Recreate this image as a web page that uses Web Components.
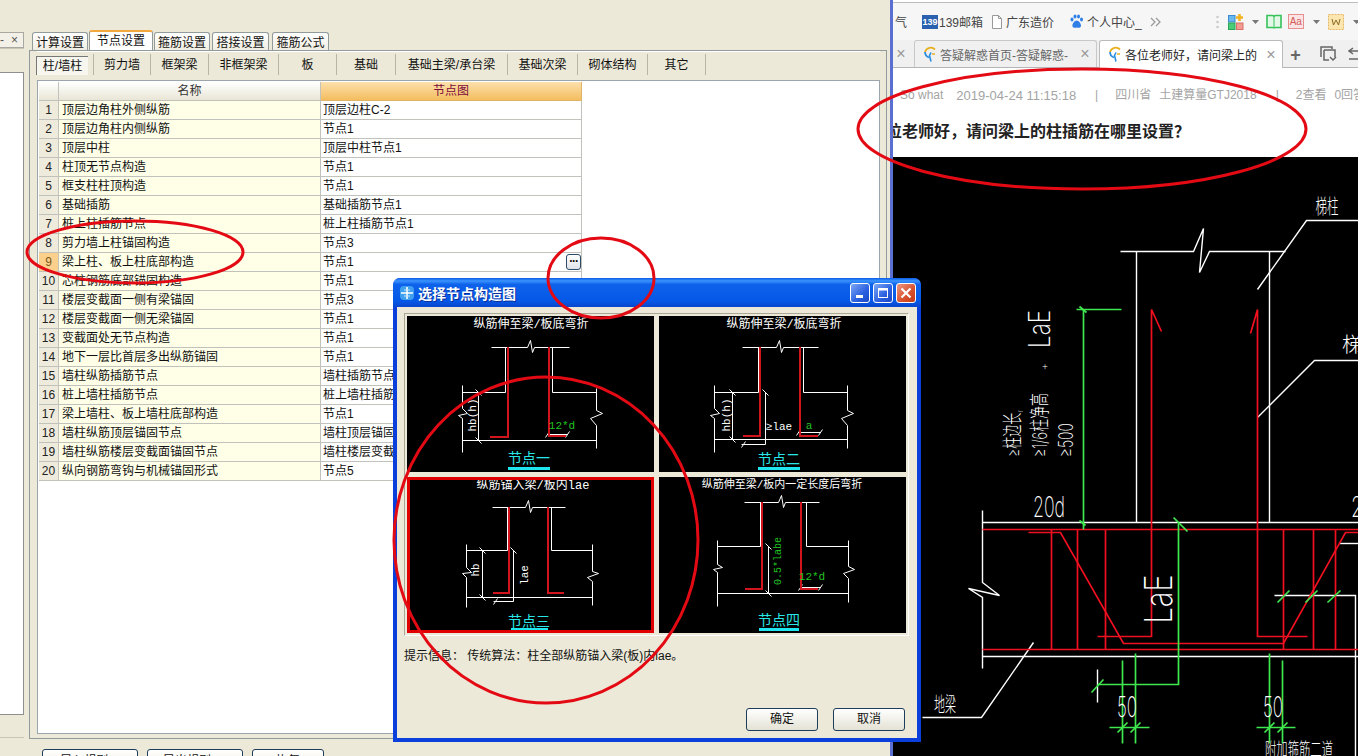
<!DOCTYPE html>
<html lang="zh">
<head>
<meta charset="utf-8">
<title>选择节点构造图</title>
<style>
    html, body { margin: 0; padding: 0; overflow: hidden; background: #ece9d8; }
</style>
</head>
<body>
<gcl-app>
    <settings-window></settings-window>
    <browser-pane></browser-pane>
    <node-dialog></node-dialog>
    <red-marks></red-marks>
</gcl-app>

<script>
const UI_FONT = `"Liberation Sans", "Noto Sans CJK SC", sans-serif`

class GclApp extends HTMLElement {
    constructor() {
        super()
        this.attachShadow({ mode: 'open' })
        this.shadowRoot.innerHTML = `
            <style>
                :host {
                    display: grid;
                    grid-template-columns: 890px 3px 465px;
                    width: 1358px;
                    height: 756px;
                    overflow: hidden;
                    position: relative;
                    font: 12px ${UI_FONT};
                    color: #111;
                }
                .strip { background: #5b6fd2; }
            </style>
            <slot name="left"></slot>
            <div class="strip"></div>
            <slot></slot>
        `
        this.querySelector('settings-window').slot = 'left'
    }
}

class SidePane extends HTMLElement {
    constructor() {
        super()
        this.attachShadow({ mode: 'open' })
        this.shadowRoot.innerHTML = `
            <style>
                :host {
                    display: flex;
                    flex-direction: column;
                    height: 756px;
                    overflow: hidden;
                }
                .head {
                    margin-top: 32px;
                    height: 14px;
                    display: flex;
                    justify-content: space-between;
                    align-items: center;
                    padding: 0 5px 0 0;
                    background: #f3f1e7;
                    border: 1px solid #a8a8a0;
                    border-left: 0;
                    font-size: 12px;
                    line-height: 14px;
                    color: #555;
                }
                .gap {
                    height: 23px;
                    border-top: 1px solid #c9c6b6;
                }
                .list {
                    height: 641px;
                    background: #fff;
                    border: 1px solid #8f8f8f;
                    border-left: 0;
                }
                .foot {
                    height: 22px;
                    border-bottom: 1px solid #c9c6b6;
                }
            </style>
            <div class="head"><span>-</span><span>×</span></div>
            <div class="gap"></div>
            <div class="list"></div>
            <div class="foot"></div>
        `
    }
}

class SettingsWindow extends HTMLElement {
    constructor() {
        super()
        this.attachShadow({ mode: 'open' })
        const tabs = [['计算设置', 56, 0], ['节点设置', 64, 0], ['箍筋设置', 56, 0], ['搭接设置', 57, 1], ['箍筋公式', 57, 2]]
        const subs = [['柱/墙柱', 57], ['剪力墙', 57], ['框架梁', 58], ['非框架梁', 70], ['板', 58], ['基础', 59], ['基础主梁/承台梁', 112], ['基础次梁', 70], ['砌体结构', 70], ['其它', 58]]
        this.shadowRoot.innerHTML = `
            <style>
                :host {
                    display: grid;
                    grid-template-columns: 24px 866px;
                    height: 756px;
                    background: #ece9d8;
                    overflow: hidden;
                }
                .main {
                    padding: 31px 3px 0 5px;
                    display: flex;
                    flex-direction: column;
                }
                .tabs {
                    display: flex;
                    height: 19px;
                    padding-left: 3px;
                    gap: 1px;
                    align-items: flex-end;
                }
                .tab {
                    height: 18px;
                    line-height: 20px;
                    text-align: center;
                    background: linear-gradient(#fff, #f0eee2);
                    border: 1px solid #919b9c;
                    border-bottom: 0;
                    border-radius: 3px 3px 0 0;
                    box-sizing: border-box;
                }
                .tab.on {
                    height: 20px;
                    line-height: 18px;
                    background: #fff;
                    border-top: 2px solid #f2a83c;
                    position: relative;
                    z-index: 1;
                }
                .panel {
                    height: 689px;
                    box-sizing: border-box;
                    border: 1px solid #919b9c;
                    padding: 0 6px 4px 7px;
                    display: flex;
                    flex-direction: column;
                }
                .subs {
                    height: 29px;
                    display: flex;
                    padding-top: 2px;
                    box-sizing: border-box;
                    border-top: 1px solid #fff;
                    align-items: flex-start;
                }
                .sub {
                    height: 21px;
                    line-height: 22px;
                    text-align: center;
                    box-sizing: border-box;
                    border-right: 1px solid #b8b5a6;
                    white-space: nowrap;
                }
                .sub.on > span {
                    display: block;
                    width: 52px;
                    margin: 2px 0 0 -1px;
                    height: 19px;
                    line-height: 18px;
                    background: #f6f5ee;
                    border-top: 1px solid #777;
                    border-left: 1px solid #777;
                    box-sizing: border-box;
                }
                .actions {
                    display: flex;
                    gap: 9px;
                    margin-top: 10px;
                    padding-left: 13px;
                }
                .btn {
                    width: 96px;
                    height: 22px;
                    line-height: 22px;
                    text-align: center;
                    box-sizing: border-box;
                    border: 1px solid #1c3d5c;
                    border-radius: 3px;
                    background: linear-gradient(#fff, #ece9d8);
                }
                .btn.small { width: 72px; }
            </style>
            <side-pane></side-pane>
            <div class="main">
                <div class="tabs">
                    ${tabs.map(([t, w, m], i) => `<div class="tab ${i == 1 ? 'on' : ''}" style="width:${w}px;margin-left:${m}px">${t}</div>`).join('')}
                </div>
                <div class="panel">
                    <div class="subs">
                        ${subs.map(([t, w], i) => `<div class="sub ${i == 0 ? 'on' : ''}" style="width:${w}px"><span>${t}</span></div>`).join('')}
                    </div>
                    <node-table></node-table>
                </div>
                <div class="actions">
                    <div class="btn">导入规则(I)</div>
                    <div class="btn">导出规则(E)</div>
                    <div class="btn small">恢复</div>
                </div>
            </div>
        `
    }
}

class NodeTable extends HTMLElement {
    constructor() {
        super()
        this.attachShadow({ mode: 'open' })
        const rows = [
            ['顶层边角柱外侧纵筋', '顶层边柱C-2'],
            ['顶层边角柱内侧纵筋', '节点1'],
            ['顶层中柱', '顶层中柱节点1'],
            ['柱顶无节点构造', '节点1'],
            ['框支柱柱顶构造', '节点1'],
            ['基础插筋', '基础插筋节点1'],
            ['桩上柱插筋节点', '桩上柱插筋节点1'],
            ['剪力墙上柱锚固构造', '节点3'],
            ['梁上柱、板上柱底部构造', '节点1'],
            ['芯柱钢筋底部锚固构造', '节点1'],
            ['楼层变截面一侧有梁锚固', '节点3'],
            ['楼层变截面一侧无梁锚固', '节点1'],
            ['变截面处无节点构造', '节点1'],
            ['地下一层比首层多出纵筋锚固', '节点1'],
            ['墙柱纵筋插筋节点', '墙柱插筋节点1'],
            ['桩上墙柱插筋节点', '桩上墙柱插筋节点1'],
            ['梁上墙柱、板上墙柱底部构造', '节点1'],
            ['墙柱纵筋顶层锚固节点', '墙柱顶层锚固节点1'],
            ['墙柱纵筋楼层变截面锚固节点', '墙柱楼层变截面节点1'],
            ['纵向钢筋弯钩与机械锚固形式', '节点5']
        ]
        this.shadowRoot.innerHTML = `
            <style>
                :host {
                    display: block;
                    flex: 1;
                    background: #fff;
                    border: 1px solid #9aa5ad;
                    padding: 1px 0 0 1px;
                    overflow: hidden;
                }
                .grid {
                    display: grid;
                    grid-template-columns: 20px 262px 261px;
                    grid-auto-rows: 19px;
                }
                .grid > div {
                    box-sizing: border-box;
                    border-bottom: 1px solid #c2c2bc;
                    border-right: 1px solid #c2c2bc;
                    padding-left: 3px;
                    line-height: 18px;
                    white-space: nowrap;
                    overflow: hidden;
                }
                .grid > .hd {
                    background: linear-gradient(#fff, #e9e6d6);
                    text-align: center;
                    padding: 0;
                    color: #333;
                }
                .grid > .hd.node {
                    background: linear-gradient(#fce0ac, #f4bd5f);
                    color: #7a0a3c;
                    border-color: #e0b468;
                }
                .grid > .num {
                    background: #eeebdd;
                    text-align: center;
                    padding: 0;
                    color: #222;
                }
                .grid > .num.cur { background: #fbd08c; color: #7a5a20; }
                .grid > .name { background: #ffffe8; }
                .grid > .val {
                    display: flex;
                    justify-content: space-between;
                    padding: 0 0 0 2px;
                }
                .more {
                    width: 15px;
                    height: 16px;
                    margin-top: 1px;
                    box-sizing: border-box;
                    border: 1px solid #2b4a68;
                    border-radius: 3px;
                    background: linear-gradient(#fff, #dfe3e8);
                    font: bold 12px/7px "Liberation Sans", sans-serif;
                    text-align: center;
                    letter-spacing: -0.5px;
                }
            </style>
            <div class="grid">
                <div class="hd"></div>
                <div class="hd">名称</div>
                <div class="hd node">节点图</div>
                ${rows.map(([name, val], i) => `
                    <div class="num ${i == 8 ? 'cur' : ''}">${i + 1}</div>
                    <div class="name">${name}</div>
                    <div class="val"><span>${val}</span>${i == 8 ? '<div class="more">...</div>' : ''}</div>
                `).join('')}
            </div>
        `
    }
}

class NodeFigure extends HTMLElement {
    static figures = {
        one: {
            box: '407 316 247 156',
            title: ['纵筋伸至梁/板底弯折', 531, 325, 12],
            white: ['491,347 527,347 530,340 532,352 534,347 569,347', '505,347 505,392 462,392', '552,347 552,392 596,392', '462,385 462,408 467,413 458,415 462,418 462,452', '596,388 596,410 602,413 590,418 596,425 596,448', '462,440 596,440', '478,392 478,440', '475,389 481,395', '475,437 481,443', '547,434 567,434', '545,437 549,431', '565,437 569,431'],
            red: ['508,347 508,437 490,437', '549,347 549,436 566,436'],
            text: [['hb(h)', 473, 415, 'w', 11, -90], ['12*d', 562, 426, 'g', 11, 0]],
            label: ['节点一', 529, 457, 508, 467, 42]
        },
        two: {
            box: '659 316 247 156',
            title: ['纵筋伸至梁/板底弯折', 784, 325, 12],
            white: ['742,347 776,347 779,340 781,352 783,347 818,347', '758,347 758,392 714,392', '803,347 803,392 847,392', '714,385 714,408 719,413 710,415 714,418 714,452', '847,385 847,410 853,413 841,418 847,425 847,448', '714,439 847,439', '732,392 732,439', '729,389 735,395', '729,436 735,442', '765,392 765,444', '741,444 765,444', '762,389 768,395', '741,447 745,441', '798,432 820,432', '796,435 800,429', '818,435 822,429'],
            red: ['760,347 760,436 743,436', '800,347 800,436 818,436'],
            text: [['hb(h)', 727, 415, 'w', 11, -90], ['≥lae', 779, 427, 'w', 11, 0], ['a', 809, 426, 'g', 11, 0]],
            label: ['节点二', 779, 458, 758, 467, 42]
        },
        three: {
            box: '407 477 247 156',
            title: ['纵筋锚入梁/板内lae', 533, 486, 12],
            white: ['492,507 525,507 528,500 530,512 532,507 565,507', '507,507 507,550 466,550', '551,507 551,550 592,550', '466,544 466,567 471,572 462,573 466,577 466,607', '592,544 592,571 598,573 587,577 592,581 592,605', '466,597 592,597', '482,550 482,597', '479,547 485,553', '479,594 485,600', '513,550 513,601', '493,601 513,601', '510,547 516,553', '493,604 497,598'],
            red: ['509,507 509,593 493,593', '548,507 548,593 564,593'],
            text: [['hb', 476, 570, 'w', 11, -90], ['lae', 525, 575, 'w', 11, -90]],
            label: ['节点三', 529, 620, 511, 628, 37],
            selected: true
        },
        four: {
            box: '659 477 247 156',
            title: ['纵筋伸至梁/板内一定长度后弯折', 782, 485, 11],
            white: ['744,502 778,502 781,495 783,507 785,502 819,502', '760,502 760,546 717,546', '806,502 806,546 848,546', '717,540 717,564 722,567 713,569 717,572 717,606', '848,540 848,566 854,569 843,573 848,578 848,602', '717,593 848,593', '768,546 768,593', '765,543 771,549', '765,590 771,596', '800,587 820,587', '798,590 802,584', '818,590 822,584'],
            red: ['762,502 762,589 745,589', '801,502 801,589 818,589'],
            text: [['0.5*labe', 778, 561, 'g', 10, -90], ['12*d', 812, 577, 'g', 11, 0]],
            label: ['节点四', 779, 619, 759, 628, 40]
        }
    }

    constructor() {
        super()
        this.attachShadow({ mode: 'open' })
        const f = NodeFigure.figures[this.getAttribute('variant')]
        const lines = (list, cls) => list.map(p => `<polyline class="${cls}" points="${p}"/>`).join('')
        const texts = f.text.map(([s, x, y, cls, size, rot]) =>
            `<text class="${cls}" x="${x}" y="${y}" font-size="${size}" ${rot ? `transform="rotate(${rot} ${x} ${y})"` : ''}>${s}</text>`).join('')
        const [label, lx, ly, bx, by, bw] = f.label
        this.shadowRoot.innerHTML = `
            <style>
                :host {
                    display: block;
                    background: #000;
                    box-sizing: border-box;
                }
                svg { display: block; width: 247px; height: 156px; }
                polyline { fill: none; }
                .w { stroke: #fff; stroke-width: 1; }
                .r { stroke: #d0161c; stroke-width: 2; }
                text {
                    text-anchor: middle;
                    dominant-baseline: central;
                    font-family: "Liberation Mono", "Noto Sans CJK SC", monospace;
                }
                text.w { fill: #fff; stroke: none; }
                text.g { fill: #22c322; }
                text.c { fill: #28e6e6; font-family: "Noto Sans CJK SC", sans-serif; }
                .frame { fill: none; stroke: #e00000; stroke-width: 3; }
            </style>
            <svg viewBox="${f.box}">
                <g transform="translate(.5 .5)">${lines(f.white, 'w')}</g>
                ${lines(f.red, 'r')}
                <text class="w" x="${f.title[1]}" y="${f.title[2]}" font-size="${f.title[3]}">${f.title[0]}</text>
                ${texts}
                <text class="c" x="${lx}" y="${ly}" font-size="14">${label}</text>
                <rect x="${bx}" y="${by}" width="${bw}" height="3" fill="#1fe6ee"/>
                ${f.selected ? `<rect class="frame" x="408.5" y="478.5" width="244" height="153"/>` : ''}
            </svg>
        `
    }
}

class NodeDialog extends HTMLElement {
    constructor() {
        super()
        this.attachShadow({ mode: 'open' })
        this.shadowRoot.innerHTML = `
            <style>
                :host {
                    position: absolute;
                    left: 393px;
                    top: 278px;
                    width: 528px;
                    height: 464px;
                    box-sizing: border-box;
                    border: 4px solid #0a3fdc;
                    border-top: 0;
                    border-radius: 7px 7px 0 0;
                    background: #ece9d8;
                    display: flex;
                    flex-direction: column;
                }
                .title {
                    height: 29px;
                    margin: 0 -4px;
                    padding: 0 4px 0 6px;
                    box-sizing: border-box;
                    display: flex;
                    align-items: center;
                    border-radius: 7px 7px 0 0;
                    background: linear-gradient(#0a5ce8 0, #3b94ff 10%, #0f62ea 22%, #0558e6 80%, #0a46cc 100%);
                    color: #fff;
                    font: bold 14px "Noto Sans CJK SC", sans-serif;
                    text-shadow: 1px 1px 0 #0a2f9c;
                }
                .title svg { margin-right: 3px; }
                .title span { flex: 1; }
                .wb {
                    width: 20px;
                    height: 20px;
                    box-sizing: border-box;
                    border: 1px solid #fff;
                    border-radius: 3px;
                    margin-left: 3px;
                    background: linear-gradient(135deg, #7ea8f5, #2a5fe0 60%, #1c47c4);
                    display: flex;
                    align-items: center;
                    justify-content: center;
                }
                .wb.close { background: linear-gradient(135deg, #eb9a84, #d8502c 60%, #c23a16); margin-right: 1px; }
                .client {
                    flex: 1;
                    padding: 6px 8px 0 7px;
                    display: flex;
                    flex-direction: column;
                }
                .frame {
                    display: grid;
                    grid-template-columns: 247px 247px;
                    grid-template-rows: 156px 156px;
                    gap: 5px;
                    padding: 2px;
                    width: 505px;
                    height: 323px;
                    box-sizing: border-box;
                    border: 1px solid #aaa798;
                    border-right-color: #fff;
                    border-bottom-color: #fff;
                }
                .hint {
                    margin-top: 11px;
                    height: 18px;
                    line-height: 18px;
                    font-size: 12px;
                    white-space: nowrap;
                }
                .buttons {
                    display: flex;
                    justify-content: flex-end;
                    gap: 15px;
                    margin-top: 43px;
                    padding-right: 4px;
                }
                .buttons div {
                    width: 72px;
                    height: 23px;
                    line-height: 21px;
                    box-sizing: border-box;
                    text-align: center;
                    border: 1px solid #1c3d5c;
                    border-radius: 3px;
                    background: linear-gradient(#fff, #e4e2d4);
                }
            </style>
            <div class="title">
                <svg width="16" height="16" viewBox="0 0 16 16">
                    <rect x="1" y="1" width="14" height="14" rx="4" fill="#3fa0f0"/>
                    <path d="M8 2v12M2 8h12" stroke="#fff" stroke-width="1.6" fill="none"/>
                    <path d="M5 5h6M5 11h6" stroke="#bfe4ff" stroke-width="1" fill="none"/>
                </svg>
                <span>选择节点构造图</span>
                <div class="wb"><svg width="12" height="12" viewBox="0 0 12 12" style="margin:0"><rect x="2" y="8" width="7" height="3" fill="#fff"/></svg></div>
                <div class="wb"><svg width="12" height="12" viewBox="0 0 12 12" style="margin:0"><rect x="1.5" y="1.5" width="9" height="9" fill="none" stroke="#fff"/><rect x="1" y="1" width="10" height="2.5" fill="#fff"/></svg></div>
                <div class="wb close"><svg width="14" height="14" viewBox="0 0 14 14" style="margin:0"><path d="M2.5 2.5l9 9M11.5 2.5l-9 9" stroke="#fff" stroke-width="2.2"/></svg></div>
            </div>
            <div class="client">
                <div class="frame">
                    <node-figure variant="one"></node-figure>
                    <node-figure variant="two"></node-figure>
                    <node-figure variant="three"></node-figure>
                    <node-figure variant="four"></node-figure>
                </div>
                <div class="hint">提示信息： 传统算法：柱全部纵筋锚入梁(板)内lae。</div>
                <div class="buttons"><div>确定</div><div>取消</div></div>
            </div>
        `
    }
}

class BrowserPane extends HTMLElement {
    constructor() {
        super()
        this.attachShadow({ mode: 'open' })
        const favicon = `<svg width="14" height="17" viewBox="0 0 14 17" style="flex:none"><path d="M12 3.5A6 6 0 0 0 2 6" fill="none" stroke="#e8b020" stroke-width="1.8"/><path d="M2 6a6 6 0 0 0 4 5.5" fill="none" stroke="#2a8fe0" stroke-width="1.8"/><path d="M8 6.5 6.5 9.500l1.500 6" fill="none" stroke="#2a8fe0" stroke-width="1.600"/><path d="M9 8h3" stroke="#e8b020" stroke-width="1.500"/></svg>`
        const caret = `<svg width="7" height="4" viewBox="0 0 7 4"><path d="M0 0h7L3.500 4z" fill="#777"/></svg>`
        this.shadowRoot.innerHTML = `
            <style>
                :host {
                    display: flex;
                    flex-direction: column;
                    height: 756px;
                    overflow: hidden;
                    background: #fff;
                    font: 12px ${UI_FONT};
                }
                .top {
                    height: 2px;
                    flex: none;
                    background: #fff;
                    border-bottom: 1px solid #bdbdbd;
                }
                .bar {
                    height: 37px;
                    flex: none;
                    display: flex;
                    align-items: center;
                    background: #f6f6f6;
                    color: #444;
                    font-size: 12px;
                    white-space: nowrap;
                    padding-left: 2px;
                }
                .logo139 {
                    width: 16px;
                    height: 14px;
                    margin-left: 15px;
                    margin-right: 1px;
                    background: #2a62b0;
                    color: #fff;
                    font: bold 9px/14px "Liberation Sans", sans-serif;
                    text-align: center;
                    flex: none;
                }
                .bar svg { flex: none; }
                .aa {
                    width: 16px;
                    height: 15px;
                    box-sizing: border-box;
                    border: 1px solid #e58f8f;
                    background: #fde4e4;
                    color: #d25a5a;
                    font: 10px/13px "Liberation Sans", sans-serif;
                    text-align: center;
                    margin-left: 6px;
                    flex: none;
                }
                .tabs {
                    height: 28px;
                    flex: none;
                    box-sizing: border-box;
                    display: flex;
                    align-items: flex-end;
                    background: #f0f0f0;
                    border-bottom: 1px solid #b5b5b5;
                    white-space: nowrap;
                    color: #666;
                    font-size: 12px;
                }
                .x {
                    width: 14px;
                    text-align: center;
                    font: 16px/20px "Liberation Sans", sans-serif;
                    color: #999;
                    flex: none;
                }
                .tab {
                    height: 27px;
                    box-sizing: border-box;
                    border: 1px solid #c8c8c8;
                    border-bottom: 0;
                    border-radius: 3px 3px 0 0;
                    display: flex;
                    align-items: center;
                    gap: 3px;
                    padding: 0 4px 0 8px;
                    flex: none;
                    overflow: hidden;
                }
                .tab b { font-weight: normal; flex: 1; overflow: hidden; }
                .tab.on {
                    height: 28px;
                    margin-bottom: -1px;
                    background: #fff;
                    color: #222;
                    border-color: #bbb;
                    margin-left: 2px;
                }
                .plus { width: 25px; text-align: center; font: bold 18px/24px "Liberation Sans", sans-serif; color: #666; flex: none; }
                .meta {
                    height: 52px;
                    flex: none;
                    box-sizing: border-box;
                    padding: 19px 0 0 7px;
                    color: #a4a4a4;
                    font-size: 12px;
                    line-height: 17px;
                    display: flex;
                    white-space: nowrap;
                }
                .meta .d { font-size: 13px; }
                h1 {
                    margin: 0 0 0 -7px;
                    height: 37px;
                    flex: none;
                    font: bold 16px/20px "Noto Sans CJK SC", sans-serif;
                    color: #222;
                    white-space: nowrap;
                }
            </style>
            <div class="top"></div>
            <div class="bar">
                <span>气</span>
                <span class="logo139">139</span>
                <span>139邮箱</span>
                <svg style="margin-left:8px" width="12" height="14" viewBox="0 0 12 14"><path d="M1.500.5h6l3 3v10h-9zM7.500.5v3h3" fill="#fff" stroke="#999"/></svg>
                <span style="margin-left:3px">广东造价</span>
                <svg style="margin-left:15px" width="15" height="15" viewBox="0 0 15 15" fill="#2f7fe6"><ellipse cx="3" cy="5.500" rx="1.500" ry="2"/><ellipse cx="6" cy="2.500" rx="1.500" ry="2"/><ellipse cx="9.500" cy="2.500" rx="1.500" ry="2"/><ellipse cx="12.500" cy="5.500" rx="1.500" ry="2"/><path d="M7.700 6.500c2 0 4.300 3 4.300 5.200 0 2.200-2.500 2.400-4.300 1.800-1.800.6-4.300.4-4.300-1.800 0-2.200 2.300-5.200 4.300-5.200z"/></svg>
                <span style="margin-left:3px">个人中心_</span>
                <svg style="margin-left:8px" width="11" height="10" viewBox="0 0 11 10"><path d="M1 1l4 4-4 4M6 1l4 4-4 4" fill="none" stroke="#999" stroke-width="1.200"/></svg>
                <svg style="margin-left:55px" width="3" height="14" viewBox="0 0 3 14" fill="#ccc"><circle cx="1.500" cy="2" r="1.300"/><circle cx="1.500" cy="7" r="1.300"/><circle cx="1.500" cy="12" r="1.300"/></svg>
                <svg style="margin-left:9px" width="17" height="16" viewBox="0 0 17 16"><rect x=".5" y="1.500" width="6.500" height="6.500" fill="#6bb8f0" stroke="#3a8ad0"/><rect x=".5" y="9" width="6.500" height="6.500" fill="#4ccb78" stroke="#2aa858"/><rect x="8.500" y="9" width="6.500" height="6.500" fill="#f59a90" stroke="#d87068"/><path d="M11.500 0v7M8 3.500h7" stroke="#f2b41e" stroke-width="2.500"/></svg>
                <span style="margin-left:7px;display:flex">${caret}</span>
                <svg style="margin-left:7px" width="16" height="15" viewBox="0 0 16 15"><path d="M1 1.500h5.500c1 0 1.500.5 1.500 1.500 0-1 .5-1.500 1.500-1.500H15v12H9.500c-1 0-1.500.5-1.500 1-.0-.5-.5-1-1.500-1H1z" fill="#e4f8e8" stroke="#35c25a" stroke-width="1.600"/><path d="M8 3v10" stroke="#35c25a"/></svg>
                <span class="aa">Aa</span>
                <span style="margin-left:9px;display:flex">${caret}</span>
                <svg style="margin-left:8px" width="16" height="16" viewBox="0 0 16 16"><rect x=".5" y=".5" width="15" height="15" fill="#fbe6b0" stroke="#e8b860" stroke-dasharray="2 1"/><path d="M4 5l1.500 6L8 6l2.500 5L12 5" fill="none" stroke="#8a6a20"/></svg>
                <span style="margin-left:9px;display:flex">${caret}</span>
            </div>
            <div class="tabs">
                <div class="x" style="margin:0 5px 3px 1px">×</div>
                <div class="tab" style="width:183px;margin-left:1px">
                    ${favicon}<b>答疑解惑首页-答疑解惑-</b><span class="x">×</span>
                </div>
                <div class="tab on" style="width:184px">
                    ${favicon}<b>各位老师好，请问梁上的</b><span class="x">×</span>
                </div>
                <div class="plus">+</div>
                <svg style="margin:0 0 5px 12px;flex:none" width="17" height="16" viewBox="0 0 17 16"><path d="M1 11V1h11v2M4 4h11v7" fill="none" stroke="#666" stroke-width="1.500"/><path d="M4 4v10h5M10 11l3 3 3-3" fill="none" stroke="#666" stroke-width="1.500"/></svg>
                <svg style="margin:0 0 6px 11px;flex:none" width="12" height="14" viewBox="0 0 12 14"><path d="M5 1 1 4l4 3M1 4h11M1 12h11" fill="none" stroke="#666" stroke-width="1.500"/></svg>
            </div>
            <div class="meta">
                <span>So what</span>
                <span class="d" style="margin-left:13px">2019-04-24 11:15:18</span>
                <span style="margin-left:19px">|</span>
                <span style="margin-left:17px">四川省</span>
                <span style="margin-left:8px">土建算量GTJ2018</span>
                <span style="margin-left:19px">|</span>
                <span style="margin-left:17px">2查看</span>
                <span style="margin-left:8px">0回答</span>
            </div>
            <h1>位老师好，请问梁上的柱插筋在哪里设置？</h1>
            <cad-drawing></cad-drawing>
        `
    }
}

class CadDrawing extends HTMLElement {
    constructor() {
        super()
        this.attachShadow({ mode: 'open' })
        const white = [
            '1120,251 1193,251 1203,228 1199,272 1209,251 1285,251',
            '1136,251 1136,522', '1269,251 1269,522',
            '1257,289 1306,220 1358,220', '1257,417 1314,360 1358,360',
            '982,510 982,582 999,595 968,588 982,597 982,668',
            '982,522 1358,522', '982,656 1358,656',
            '922,717 981,717 1033,642',
            '1097,669 1097,702',
            '1274,595 1355,595 1355,756', '1339,543 1358,543'
        ]
        const red = [
            '1161,331 1151,309 1151,636 1097,636', '1250,333 1257,309 1257,636 1307,636',
            '982,529 1358,529', '982,649 1358,649',
            '1028,532 1060,532 1123,643 1283,643 1345,532 1358,532',
            '1051,529 1051,649', '1077,529 1077,649', '1105,529 1105,649',
            '1283,529 1283,649', '1313,529 1313,649', '1335,529 1335,649'
        ]
        const green = [
            '1076,309 1121,309', '1083,309 1083,529', '1079,306 1086,312', '1079,520 1085,525',
            '1178,523 1178,684 1097,684', '1173,517 1187,531', '1091,692 1103,679',
            '1122,660 1122,743', '1135,653 1135,743', '1269,653 1269,743', '1282,660 1282,743',
            '1109,727 1149,727', '1256,727 1295,727',
            '1117,732 1127,722', '1130,732 1140,722', '1264,732 1274,722', '1277,732 1287,722',
            '1277,602 1289,590', '1305,602 1317,590', '1327,602 1340,590'
        ]
        const lines = (list, cls) => list.map(p => `<polyline class="${cls}" points="${p}"/>`).join('')
        const t = (s, x, y, size, len, rot) =>
            `<text x="${x}" y="${y}" font-size="${size}" textLength="${len}" lengthAdjust="spacingAndGlyphs" ${rot ? `transform="rotate(-90 ${x} ${y})"` : ''}>${s}</text>`
        this.shadowRoot.innerHTML = `
            <style>
                :host { display: block; flex: 1; background: #000; overflow: hidden; }
                svg { display: block; width: 465px; height: 599px; }
                polyline { fill: none; }
                .w { stroke: #fff; stroke-width: 1.4; }
                .r { stroke: #f01020; stroke-width: 1.7; }
                .g { stroke: #40e850; stroke-width: 1.7; }
                text {
                    fill: #fff;
                    text-anchor: middle;
                    dominant-baseline: central;
                    font-family: Inter, "Noto Sans CJK SC", sans-serif;
                    font-weight: 200;
                }
            </style>
            <svg viewBox="893 157 465 599">
                <g transform="translate(.5 .5)">
                    ${lines(white, 'w')}
                    ${lines(red, 'r')}
                    ${lines(green, 'g')}
                </g>
                ${t('LaE', 1039, 329, 30, 38, true)}
                ${t('+', 1045, 365, 12, 7, false)}
                ${t('≥柱边长,', 1013, 433, 20, 47, true)}
                ${t('≥1/6柱净高', 1040, 425, 20, 64, true)}
                ${t('≥500', 1066, 440, 20, 34, true)}
                ${t('20d', 1049, 507, 28, 32, false)}
                ${t('2', 1357, 507, 28, 12, false)}
                ${t('LaE', 1158, 599, 38, 49, true)}
                ${t('50', 1127, 707, 28, 20, false)}
                ${t('50', 1273, 707, 28, 20, false)}
                ${t('地梁', 945, 705, 20, 22, false)}
                ${t('梯柱', 1327, 207, 20, 23, false)}
                ${t('梯柱', 1363, 345, 20, 42, false)}
                ${t('附加箍筋二道', 1299, 749, 18, 68, false)}
            </svg>
        `
    }
}

class RedMarks extends HTMLElement {
    constructor() {
        super()
        this.attachShadow({ mode: 'open' })
        this.shadowRoot.innerHTML = `
            <style>
                :host {
                    position: absolute;
                    left: 0;
                    top: 0;
                    width: 1358px;
                    height: 756px;
                    pointer-events: none;
                }
                svg { display: block; }
                ellipse { fill: none; stroke: #e40a14; stroke-width: 3; }
            </style>
            <svg width="1358" height="756" viewBox="0 0 1358 756">
                <ellipse cx="135" cy="252" rx="108" ry="31"/>
                <ellipse cx="601" cy="278" rx="53" ry="40"/>
                <ellipse cx="546" cy="540" rx="152" ry="163"/>
                <ellipse cx="1082" cy="129" rx="224" ry="60"/>
            </svg>
        `
    }
}

window.customElements.define('side-pane', SidePane)
window.customElements.define('node-table', NodeTable)
window.customElements.define('settings-window', SettingsWindow)
window.customElements.define('node-figure', NodeFigure)
window.customElements.define('node-dialog', NodeDialog)
window.customElements.define('cad-drawing', CadDrawing)
window.customElements.define('browser-pane', BrowserPane)
window.customElements.define('red-marks', RedMarks)
window.customElements.define('gcl-app', GclApp)
</script>
</body>
</html>
